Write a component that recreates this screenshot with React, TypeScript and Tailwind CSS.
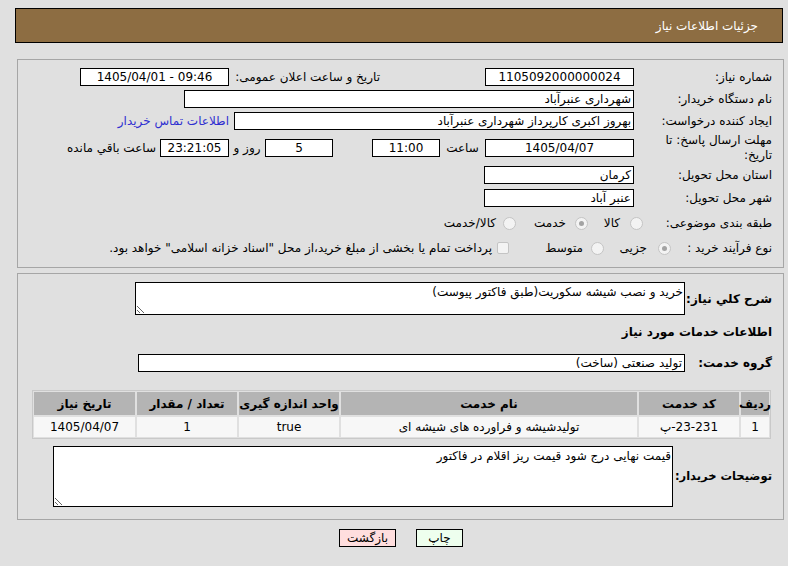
import React from 'react';

type BoxProps = { w: string; center?: boolean; className?: string; children?: React.ReactNode };

const Box: React.FC<BoxProps> = ({ w, center, className, children }) => (
  <div
    className={`h-[18px] shrink-0 border border-black bg-white flex items-center px-[2px] leading-none whitespace-nowrap overflow-hidden ${w} ${center ? 'justify-center' : ''} ${className ?? ''}`}
  >
    {children}
  </div>
);

const Label: React.FC<{ w: string; children: React.ReactNode }> = ({ w, children }) => (
  <div className={`shrink-0 whitespace-nowrap ${w}`}>{children}</div>
);

const Radio: React.FC<{ checked?: boolean }> = ({ checked }) => (
  <div className="w-[13px] h-[13px] shrink-0 rounded-full border border-[#c4c4c4] bg-[#f3f3f3] flex items-center justify-center">
    {checked && <div className="w-[5px] h-[5px] rounded-full bg-[#a3a3a3]" />}
  </div>
);

const headers = ['ردیف', 'کد خدمت', 'نام خدمت', 'واحد اندازه گیری', 'تعداد / مقدار', 'تاریخ نیاز'];

export default function App() {
  return (
    <div
      dir="rtl"
      className="w-[788px] min-h-[566px] bg-[#e0e0e0] pt-[8px] text-[12px] text-black font-['DejaVu_Sans',sans-serif]"
    >
      {/* Header */}
      <div className="ml-[15px] mr-[5px] h-[35px] bg-[#8d6d42] border border-black flex items-center pr-[24px] text-white">
        جزئیات اطلاعات نیاز
      </div>

      {/* Main info */}
      <div className="ml-[17px] mr-[4px] mt-[16px] border border-[#a6a6a6] pr-[11px] pt-[5px] pb-[7px]">
        <div className="h-[23px] flex items-center">
          <Label w="w-[138px]">شماره نیاز:</Label>
          <Box w="w-[149px]" center>1105092000000024</Box>
          <div className="w-[105px] shrink-0" />
          <Label w="w-[151px]">تاریخ و ساعت اعلان عمومی:</Label>
          <Box w="w-[149px]" center>
            <span dir="ltr">1405/04/01 - 09:46</span>
          </Box>
        </div>

        <div className="h-[22px] flex items-center">
          <Label w="w-[138px]">نام دستگاه خریدار:</Label>
          <Box w="w-[450px]">شهرداری عنبرآباد</Box>
        </div>

        <div className="h-[22px] flex items-center">
          <Label w="w-[138px]">ایجاد کننده درخواست:</Label>
          <Box w="w-[400px]">بهروز اکبری کارپرداز شهرداری عنبرآباد</Box>
          <span className="mr-[5px] text-[#2f2fd0] whitespace-nowrap">اطلاعات تماس خریدار</span>
        </div>

        <div className="h-[32px] flex items-center">
          <Label w="w-[138px]">
            <div className="leading-[15px]">
              مهلت ارسال پاسخ: تا
              <br />
              تاریخ:
            </div>
          </Label>
          <Box w="w-[149px]" center>1405/04/07</Box>
          <div className="w-[45px] shrink-0 text-center">ساعت</div>
          <Box w="w-[68px]" center>11:00</Box>
          <div className="w-[39px] shrink-0" />
          <Box w="w-[68px]" center>5</Box>
          <div className="w-[36px] shrink-0 text-center">روز و</div>
          <Box w="w-[69px]" center className="bg-[#ffffea]">23:21:05</Box>
          <span className="mr-[4px] whitespace-nowrap">ساعت باقي مانده</span>
        </div>

        <div className="h-[22px] flex items-center">
          <Label w="w-[138px]">استان محل تحویل:</Label>
          <Box w="w-[150px]">کرمان</Box>
        </div>

        <div className="h-[24px] flex items-center">
          <Label w="w-[138px]">شهر محل تحویل:</Label>
          <Box w="w-[150px]">عنبر آباد</Box>
        </div>

        <div className="h-[26px] flex items-center">
          <Label w="w-[129px]">طبقه بندی موضوعی:</Label>
          <div className="w-[55px] shrink-0 flex items-center gap-[10px]">
            <Radio />
            <span>کالا</span>
          </div>
          <div className="w-[72px] shrink-0 flex items-center gap-[9px]">
            <Radio checked />
            <span>خدمت</span>
          </div>
          <div className="flex items-center gap-[7px]">
            <Radio />
            <span>کالا/خدمت</span>
          </div>
        </div>

        <div className="h-[24px] flex items-center">
          <Label w="w-[101px]">نوع فرآیند خرید :</Label>
          <div className="w-[67px] shrink-0 flex items-center gap-[11px]">
            <Radio checked />
            <span>جزیی</span>
          </div>
          <div className="w-[95px] shrink-0 flex items-center gap-[8px]">
            <Radio />
            <span>متوسط</span>
          </div>
          <div className="flex items-center gap-[5px]">
            <div className="w-[12px] h-[12px] shrink-0 rounded-[2px] border border-[#c4c4c4] bg-[#f3f3f3]" />
            <span className="whitespace-nowrap">
              پرداخت تمام یا بخشی از مبلغ خرید،از محل "اسناد خزانه اسلامی" خواهد بود.
            </span>
          </div>
        </div>
      </div>

      {/* Details */}
      <div className="ml-[17px] mr-[4px] mt-[5px] border border-[#a6a6a6] pr-[11px] pt-[8px] pb-[12px]">
        <div className="flex items-center">
          <Label w="w-[87px]">
            <span className="font-bold">شرح کلي نیاز:</span>
          </Label>
          <textarea
            readOnly
            defaultValue="خرید و نصب شیشه سکوریت(طبق فاکتور پیوست)"
            className="w-[550px] h-[33px] shrink-0 border border-black bg-white px-[1px] pt-[1px] pb-0 text-[12px] leading-[16px] outline-none"
          />
        </div>

        <div className="h-[34px] flex items-center font-bold">اطلاعات خدمات مورد نیاز</div>

        <div className="mt-[5px] flex items-center">
          <Label w="w-[87px]">
            <span className="font-bold">گروه خدمت:</span>
          </Label>
          <Box w="w-[547px]">تولید صنعتی (ساخت)</Box>
        </div>

        <div className="mt-[18px] mr-[1px] w-[739px] border border-[#c9c9c9] p-[1px] grid grid-cols-[28px_100px_296px_100px_100px_101px] gap-[2px]">
          {headers.map((h) => (
            <div key={h} className="h-[23px] bg-[#b4b4b4] font-bold flex items-center justify-center whitespace-nowrap">
              {h}
            </div>
          ))}
          <div className="h-[20px] bg-[#f7f7f7] flex items-center justify-center">1</div>
          <div className="h-[20px] bg-[#f7f7f7] flex items-center justify-center">
            <bdo dir="ltr">پ-23-231</bdo>
          </div>
          <div className="h-[20px] bg-[#f7f7f7] flex items-center justify-center">تولیدشیشه و فراورده های شیشه ای</div>
          <div className="h-[20px] bg-[#f7f7f7] flex items-center justify-center">true</div>
          <div className="h-[20px] bg-[#f7f7f7] flex items-center justify-center">1</div>
          <div className="h-[20px] bg-[#f7f7f7] flex items-center justify-center">1405/04/07</div>
        </div>

        <div className="mt-[7px] flex items-center">
          <Label w="w-[99px]">
            <span className="font-bold text-[11.5px] tracking-[-0.2px]">توضیحات خریدار:</span>
          </Label>
          <textarea
            readOnly
            defaultValue="قیمت نهایی درج شود قیمت ریز اقلام در فاکتور"
            className="w-[620px] h-[61px] shrink-0 border border-black bg-white px-[1px] pt-[1px] pb-0 text-[12px] leading-[16px] outline-none"
          />
        </div>
      </div>

      {/* Buttons */}
      <div className="mt-[9px] mr-[325px] flex gap-[20px]">
        <button className="w-[47px] h-[18px] border border-black bg-[#eeffee] text-[12px] leading-none flex items-center justify-center">
          چاپ
        </button>
        <button className="w-[57px] h-[18px] border border-black bg-[#ffdede] text-[12px] leading-none flex items-center justify-center">
          بازگشت
        </button>
      </div>
    </div>
  );
}
